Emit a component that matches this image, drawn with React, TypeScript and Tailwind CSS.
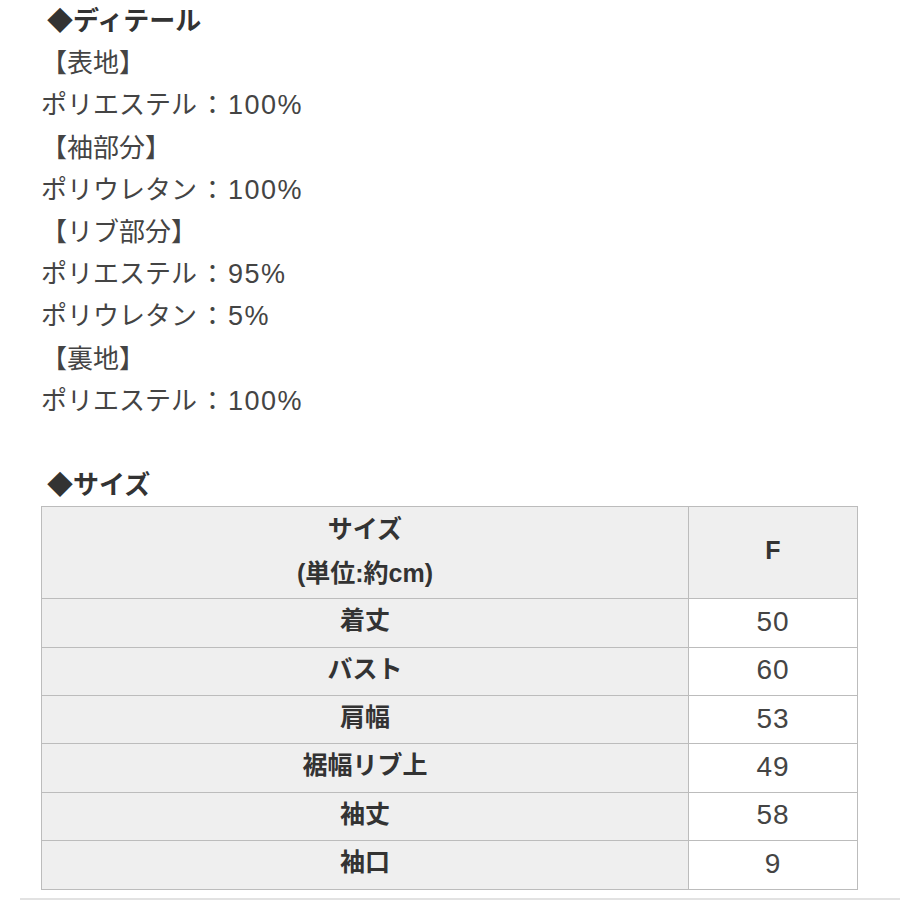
import React from 'react';

const details: { label: string; items: [string, string][] }[] = [
  { label: '【表地】', items: [['ポリエステル', '100%']] },
  { label: '【袖部分】', items: [['ポリウレタン', '100%']] },
  {
    label: '【リブ部分】',
    items: [
      ['ポリエステル', '95%'],
      ['ポリウレタン', '5%'],
    ],
  },
  { label: '【裏地】', items: [['ポリエステル', '100%']] },
];

const rows: [string, string][] = [
  ['着丈', '50'],
  ['バスト', '60'],
  ['肩幅', '53'],
  ['裾幅リブ上', '49'],
  ['袖丈', '58'],
  ['袖口', '9'],
];

const font = { fontFamily: '"Liberation Sans", "Noto Sans CJK JP", sans-serif' };

export default function App() {
  return (
    <div className="w-[900px] h-[900px] bg-white text-[#444] overflow-hidden flex flex-col" style={font}>
      <div className="pl-[41px] text-[26px] leading-[42.2px]">
        <div className="pl-[6px] font-bold text-[#333]">◆ディテール</div>
        {details.map((d) => (
          <React.Fragment key={d.label}>
            <div>{d.label}</div>
            {d.items.map(([name, pct]) => (
              <div key={name + pct}>
                {name}
                <span className="inline-block w-[31px] text-center">：</span>
                <span className="text-[27px] tracking-[1.5px]">{pct}</span>
              </div>
            ))}
          </React.Fragment>
        ))}
        <div>&nbsp;</div>
        <div className="pl-[6px] font-bold text-[#333]">◆サイズ</div>
      </div>

      <div className="ml-[41px] w-[817px] border border-[#bcbcbc] text-[25px]">
        <div className="grid grid-cols-[647px_1fr] h-[92px] bg-[#efefef] border-b border-[#bcbcbc]">
          <div className="flex flex-col items-center justify-center pb-[4px] font-bold text-[#333] leading-[44px] border-r border-[#bcbcbc]">
            <span>サイズ</span>
            <span>(単位:約cm)</span>
          </div>
          <div className="flex items-center justify-center pb-[6px] font-bold text-[#333]">F</div>
        </div>
        {rows.map(([k, v], i) => (
          <div
            key={k}
            className={`grid grid-cols-[647px_1fr] h-[48.3px] ${i < rows.length - 1 ? 'border-b border-[#bcbcbc]' : ''}`}
          >
            <div className="flex items-center justify-center pb-[4px] bg-[#efefef] font-bold text-[#333] border-r border-[#bcbcbc]">
              {k}
            </div>
            <div className="flex items-center justify-center pb-[2px] bg-white text-[28px] tracking-[1px]">{v}</div>
          </div>
        ))}
      </div>

      <div className="mt-auto ml-[20px] border-b-2 border-[#e2e2e2]" />
    </div>
  );
}
